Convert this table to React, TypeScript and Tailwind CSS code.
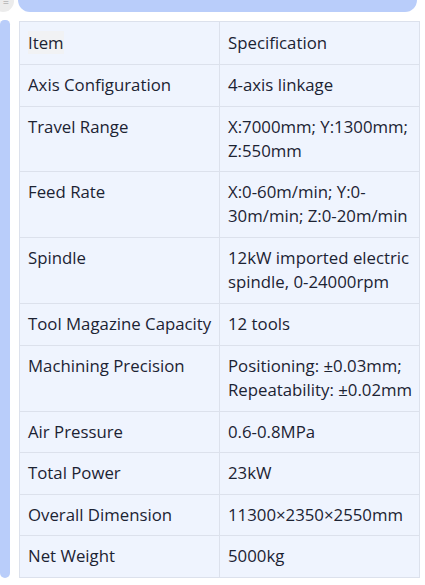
const ROWS: [string, string[]][] = [
  ["Axis Configuration", ["4-axis linkage"]],
  ["Travel Range", ["X:7000mm; Y:1300mm;", "Z:550mm"]],
  ["Feed Rate", ["X:0-60m/min; Y:0-", "30m/min; Z:0-20m/min"]],
  ["Spindle", ["12kW imported electric", "spindle, 0-24000rpm"]],
  ["Tool Magazine Capacity", ["12 tools"]],
  ["Machining Precision", ["Positioning: ±0.03mm;", "Repeatability: ±0.02mm"]],
  ["Air Pressure", ["0.6-0.8MPa"]],
  ["Total Power", ["23kW"]],
  ["Overall Dimension", ["11300×2350×2550mm"]],
  ["Net Weight", ["5000kg"]],
];

const cell = "border border-[#dce1ec] px-[8px] align-top whitespace-nowrap";

export default function App() {
  return (
    <div
      className="h-[585px] w-[425px] overflow-hidden bg-white text-[#1c2333]"
      style={{ fontFamily: '"Open Sans", "Noto Sans", sans-serif' }}
    >
      {/* scrolled header strip */}
      <div className="flex h-[12px] items-end">
        <div className="-ml-[8px] flex h-[22px] w-[22px] shrink-0 items-center justify-center rounded-full bg-[#ececec] pl-[6px] text-[11px] leading-none text-[#9a9a9a]">
          =
        </div>
        <div className="ml-[4px] h-[24px] w-[399px] rounded-full bg-[#b9cdfa]" />
      </div>

      <div className="flex">
        <div className="mt-[8px] h-[558px] w-[10px] shrink-0 rounded-b-[7px] rounded-t-[6px] bg-[#b9cdfa]" />
        <table className="ml-[9px] mt-[9px] w-[401px] table-fixed border-collapse bg-[#eff4fe] text-[16.8px] leading-[24px]">
          <colgroup>
            <col className="w-[200px]" />
            <col />
          </colgroup>
          <tbody>
            <tr className="h-[43px]">
              <td className={`${cell} py-[9px]`}>
                <span className="bg-[#f1f2f4]">Item</span>
              </td>
              <td className={`${cell} py-[9px]`}>Specification</td>
            </tr>
            {ROWS.map(([k, v]) => (
              <tr key={k}>
                <td className={`${cell} py-[8px]`}>{k}</td>
                <td className={`${cell} py-[8px]`}>
                  {v.map((line) => (
                    <div key={line}>{line}</div>
                  ))}
                </td>
              </tr>
            ))}
          </tbody>
        </table>
      </div>
    </div>
  );
}
